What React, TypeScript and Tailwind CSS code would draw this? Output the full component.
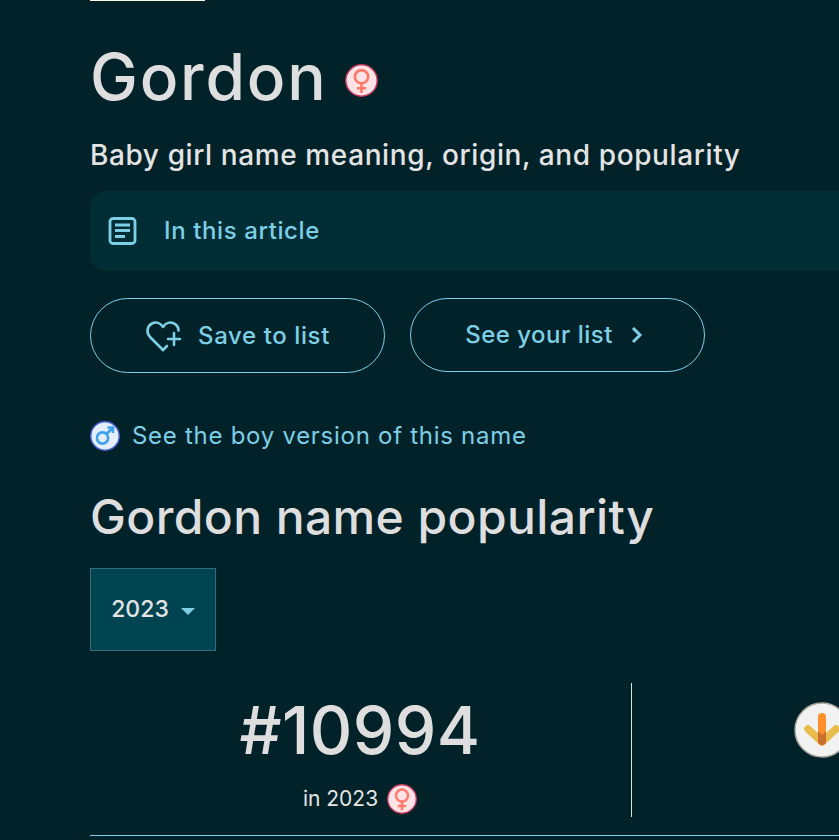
const font = { fontFamily: 'Inter, sans-serif' };

function FemaleIcon({ size }: { size: number }) {
  return (
    <svg width={size} height={size} viewBox="0 0 32 32" aria-hidden="true" className="shrink-0">
      <circle cx="16" cy="16" r="15.2" fill="#ffe3e6" stroke="#c8385f" strokeWidth="1.4" />
      <circle cx="16" cy="12.300" r="6.400" fill="none" stroke="#ff7a6b" strokeWidth="2.600" />
      <path d="M16 18.500V28M11.500 23.500H20.500" fill="none" stroke="#ff7a6b" strokeWidth="2.600" />
    </svg>
  );
}

function MaleIcon() {
  return (
    <svg width="30" height="30" viewBox="0 0 30 30" aria-hidden="true" className="shrink-0">
      <circle cx="15" cy="15" r="14.2" fill="#e4eeff" stroke="#4a62d8" strokeWidth="1.4" />
      <circle cx="12.5" cy="17" r="5.6" fill="none" stroke="#3ea2ee" strokeWidth="2.6" />
      <path d="M16.5 13L23 6.5M17.5 6.5H23V12" fill="none" stroke="#3ea2ee" strokeWidth="2.6" />
    </svg>
  );
}

function ArticleIcon() {
  return (
    <svg width="30" height="30" viewBox="0 0 30 30" fill="none" stroke="#7dcfe6" strokeWidth="2.800" aria-hidden="true" className="shrink-0">
      <rect x="3" y="2.500" width="25" height="25" rx="3" />
      <path d="M8 9H23M8 14.500H23M8 20.500H18" />
    </svg>
  );
}

function HeartPlusIcon() {
  return (
    <svg width="38" height="32" viewBox="0 0 38 32" fill="none" stroke="#7dcfe6" strokeWidth="2.600" strokeLinecap="round" strokeLinejoin="round" aria-hidden="true" className="shrink-0">
      <path d="M18 30L5 17C1 12.500 2 6 7 3.500C11 1.500 15.500 3 18 7C20.500 3 25 1.500 29 3.500C32 5 33.500 7.500 33.500 10.500" />
      <path d="M18 30L22 26" />
      <path d="M29 13V25M23 19H35" />
    </svg>
  );
}

function ChevronIcon() {
  return (
    <svg width="14" height="18" viewBox="0 0 14 18" fill="none" stroke="#7dcfe6" strokeWidth="3" aria-hidden="true" className="shrink-0">
      <path d="M3 2L10 9L3 16" />
    </svg>
  );
}

function TrendIcon() {
  return (
    <svg width="56" height="56" viewBox="0 0 56 56" aria-hidden="true" className="shrink-0">
      <circle cx="28" cy="28" r="27" fill="#f2f2f2" stroke="#a9a79c" strokeWidth="1.500" />
      <path d="M14 27L28 40L42 27" fill="none" stroke="#e8bb4a" strokeWidth="7.500" strokeLinecap="round" strokeLinejoin="round" />
      <path d="M28 15V39" fill="none" stroke="#ff8f2b" strokeWidth="8" strokeLinecap="round" />
      <path d="M24 29L28 33L32 29V39A4 4 0 0 1 24 39Z" fill="#c97030" />
    </svg>
  );
}

export default function App() {
  return (
    <div className="w-[839px] h-[840px] overflow-hidden bg-[#02222a] pl-[90px]" style={font}>
      <div className="w-[115px] h-px bg-[#fdf8e1]" />

      {/* Title */}
      <div className="mt-[37px] flex items-center h-[78px]">
        <h1 className="text-[64px] leading-[78px] tracking-[1.8px] font-medium text-[#dedede]">Gordon</h1>
        <div className="ml-[17px] mt-[7px]">
          <FemaleIcon size={33} />
        </div>
      </div>
      <p className="mt-[19px] text-[28px] leading-[40px] tracking-[0.6px] font-medium text-[#e4e4e4]">
        Baby girl name meaning, origin, and popularity
      </p>

      {/* Article box */}
      <div className="mt-[16px] w-[900px] h-[80px] rounded-2xl bg-[#012d35] flex items-center pl-[17px] gap-[27px]">
        <ArticleIcon />
        <span className="text-[24px] tracking-[0.6px] font-medium text-[#7dcfe6]">In this article</span>
      </div>

      {/* Buttons */}
      <div className="mt-[27px] flex gap-[25px] items-start">
        <button className="w-[295px] h-[75px] rounded-full border border-[#7dcfe6] flex items-center justify-center gap-[15px] text-[24px] tracking-[0.6px] font-medium text-[#7dcfe6]">
          <HeartPlusIcon />
          Save to list
        </button>
        <button className="w-[295px] h-[74px] rounded-full border border-[#7dcfe6] pr-[6px] flex items-center justify-center gap-[17px] text-[24px] tracking-[0.5px] font-medium text-[#7dcfe6]">
          See your list
          <ChevronIcon />
        </button>
      </div>

      {/* Boy version */}
      <div className="mt-[45px] flex items-center gap-[12px]">
        <MaleIcon />
        <span className="text-[24px] leading-[36px] tracking-[0.72px] text-[#7dcfe6]">See the boy version of this name</span>
      </div>

      {/* Popularity */}
      <h2 className="mt-[32px] text-[48px] leading-[62px] tracking-[0.4px] font-medium text-[#dedede]">Gordon name popularity</h2>
      <div className="mt-[20px] w-[126px] h-[83px] bg-[#004451] border border-[#2f6f7a] flex items-center justify-center gap-[12px]">
        <span className="text-[23px] font-medium text-[#e4e4e4]">2023</span>
        <span className="w-0 h-0 mt-[3px] border-x-[7px] border-x-transparent border-t-[7px] border-t-[#7dcfe6]" />
      </div>

      <div className="mt-[32px] w-[900px] border-b border-[#7dcfe6] pb-[18px] flex">
        <div className="w-[542px] h-[134px] border-r border-[#dedede] flex flex-col items-center pr-[1px]">
          <div className="text-[66px] leading-[94px] tracking-[0.4px] font-medium text-[#dedede]">#10994</div>
          <div className="mt-[6px] flex items-center gap-[9px]">
            <span className="text-[21px] text-[#e4e4e4]">in 2023</span>
            <FemaleIcon size={30} />
          </div>
        </div>
        <div className="ml-[162px] mt-[19px]">
          <TrendIcon />
        </div>
      </div>
    </div>
  );
}
